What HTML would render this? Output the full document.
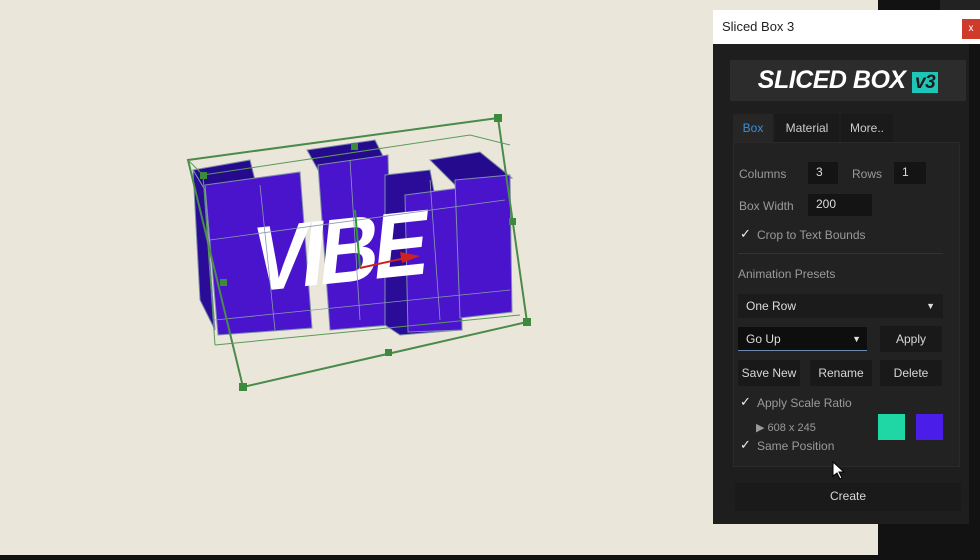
<!DOCTYPE html>
<html><head><meta charset="utf-8"><style>
*{margin:0;padding:0;box-sizing:border-box}
body{width:980px;height:560px;overflow:hidden;background:#ebe6da;position:relative;font-family:"Liberation Sans",sans-serif;font-size:12px}
.abs{position:absolute}
.lbl{color:#9a9a9a;font-size:12px}
.in{background:#141414;color:#ddd;font-size:12px;padding:3px 8px}
.btn{background:#191919;color:#d8d8d8;text-align:center;font-size:12px;line-height:26px}
.chk{color:#eee;font-size:13px}
</style></head><body>
<div class="abs" style="left:878px;top:0;width:102px;height:560px;background:#121212"></div>
<div class="abs" style="left:0;top:555px;width:980px;height:5px;background:#121212"></div>
<div class="abs" style="left:940px;top:0;width:40px;height:10px;background:#222"></div>

<svg class="abs" style="left:0;top:0" width="700" height="420">
<g stroke="#7e8fa8" stroke-width="1">
<polygon points="193,170 250,160 255,180 205,190" fill="#260a8e"/>
<polygon points="193,170 205,190 215,330 200,300" fill="#2a0c98"/>
<polygon points="205,185 300,172 312,328 218,335" fill="#4a14cc"/>
<polygon points="307,150 375,140 385,160 318,170" fill="#260a8e"/>
<polygon points="318,165 388,155 392,325 330,330" fill="#4a14cc"/>
<polygon points="385,175 430,170 460,330 400,335 385,325" fill="#2a0c98"/>
<polygon points="405,195 460,188 462,330 408,332" fill="#4a14cc"/>
<polygon points="430,160 480,152 512,178 455,185" fill="#260a8e"/>
<polygon points="455,180 510,175 512,312 460,318" fill="#4a14cc"/>
</g>
<g transform="translate(250,292) rotate(-6) skewX(-12) scale(0.9,1)">
<text x="0" y="0" font-family="Liberation Sans" font-weight="bold" font-size="92" fill="#fff" letter-spacing="-6">VIBE</text>
</g>
<g stroke="#8a9ab0" stroke-width="0.8" fill="none">
<line x1="210" y1="240" x2="505" y2="200"/><line x1="215" y1="320" x2="510" y2="290"/>
<line x1="260" y1="185" x2="275" y2="330"/><line x1="350" y1="160" x2="360" y2="320"/><line x1="430" y1="180" x2="440" y2="320"/>
</g>
<g stroke="#4a8a4a" stroke-width="2" fill="none">
<polygon points="188,160 498,118 527,322 243,387"/>
</g>
<g stroke="#5a9a5a" stroke-width="1" fill="none">
<polyline points="203,175 470,135 510,145"/><line x1="215" y1="345" x2="520" y2="315"/><line x1="188" y1="160" x2="203" y2="175"/><line x1="203" y1="175" x2="215" y2="345"/>
</g>
<g fill="#3c8a3c">
<rect x="494" y="114" width="8" height="8"/><rect x="523" y="318" width="8" height="8"/><rect x="239" y="383" width="8" height="8"/>
<rect x="351" y="143" width="7" height="7"/><rect x="509" y="218" width="7" height="7"/><rect x="385" y="349" width="7" height="7"/><rect x="220" y="279" width="7" height="7"/><rect x="200" y="172" width="7" height="7"/>
</g>
<line x1="360" y1="268" x2="355" y2="210" stroke="#2a9a2a" stroke-width="2"/>
<line x1="360" y1="268" x2="410" y2="257" stroke="#cc2222" stroke-width="2"/>
<polygon points="400,252 420,256 402,263" fill="#cc2222"/>
</svg>

<div class="abs" style="left:713px;top:10px;width:267px;height:34px;background:#fff"></div>
<div class="abs" style="left:722px;top:19px;font-size:13px;color:#222">Sliced Box 3</div>
<div class="abs" style="left:962px;top:19px;width:18px;height:20px;background:#d03a2a;color:#fff;font-size:10px;text-align:center;line-height:20px">x</div>
<div class="abs" style="left:713px;top:44px;width:256px;height:480px;background:#1e1e1e"></div>
<div class="abs" style="left:730px;top:60px;width:236px;height:41px;background:#2c2c2c;text-align:center;line-height:41px;color:#fff;font-weight:bold;font-style:italic;font-size:25px;letter-spacing:-0.5px">SLICED BOX <span style="background:#1fc6b8;color:#1a1a1a;font-size:19px;padding:0 3px">v3</span></div>
<div class="abs" style="left:733px;top:114px;width:40px;height:28px;background:#262626;color:#3a8fd8;line-height:28px;text-align:center">Box</div>
<div class="abs" style="left:775px;top:114px;width:64px;height:28px;background:#1a1a1a;color:#ccc;line-height:28px;text-align:center">Material</div>
<div class="abs" style="left:841px;top:114px;width:52px;height:28px;background:#1a1a1a;color:#ccc;line-height:28px;text-align:center">More..</div>
<div class="abs" style="left:733px;top:142px;width:227px;height:325px;background:#222;border:1px solid #2a2a2a"></div>
<div class="abs lbl" style="left:739px;top:167px">Columns</div>
<div class="abs in" style="left:808px;top:162px;width:30px;height:22px">3</div>
<div class="abs lbl" style="left:852px;top:167px">Rows</div>
<div class="abs in" style="left:894px;top:162px;width:32px;height:22px">1</div>
<div class="abs lbl" style="left:739px;top:199px">Box Width</div>
<div class="abs in" style="left:808px;top:194px;width:64px;height:22px">200</div>
<div class="abs chk" style="left:740px;top:226px">✓</div>
<div class="abs lbl" style="left:757px;top:228px">Crop to Text Bounds</div>
<div class="abs" style="left:738px;top:253px;width:205px;height:1px;background:#333"></div>
<div class="abs lbl" style="left:738px;top:267px">Animation Presets</div>
<div class="abs" style="left:738px;top:294px;width:205px;height:24px;background:#1b1b1b;color:#ddd;line-height:24px;padding-left:8px">One Row<span style="position:absolute;right:8px;font-size:9px">▼</span></div>
<div class="abs" style="left:738px;top:327px;width:129px;height:24px;background:#0e0e0e;color:#ddd;line-height:24px;padding-left:8px;border-bottom:1px solid #6a8ab0">Go Up<span style="position:absolute;right:6px;font-size:9px">▼</span></div>
<div class="abs btn" style="left:880px;top:326px;width:62px">Apply</div>
<div class="abs btn" style="left:738px;top:360px;width:62px">Save New</div>
<div class="abs btn" style="left:810px;top:360px;width:62px">Rename</div>
<div class="abs btn" style="left:880px;top:360px;width:62px">Delete</div>
<div class="abs chk" style="left:740px;top:394px">✓</div>
<div class="abs lbl" style="left:757px;top:396px">Apply Scale Ratio</div>
<div class="abs lbl" style="left:756px;top:421px;font-size:11px">▶ 608 x 245</div>
<div class="abs chk" style="left:740px;top:437px">✓</div>
<div class="abs lbl" style="left:757px;top:439px">Same Position</div>
<div class="abs" style="left:878px;top:414px;width:27px;height:26px;background:#1fd6a5"></div>
<div class="abs" style="left:916px;top:414px;width:27px;height:26px;background:#4a1ee8"></div>
<div class="abs btn" style="left:735px;top:483px;width:226px;height:28px;background:#1a1a1a">Create</div>
<svg class="abs" style="left:832px;top:461px" width="14" height="20"><polygon points="1,1 1,15 5,12 8,18 10,17 7,11 12,11" fill="#fff" stroke="#000" stroke-width="1"/></svg>
</body></html>
